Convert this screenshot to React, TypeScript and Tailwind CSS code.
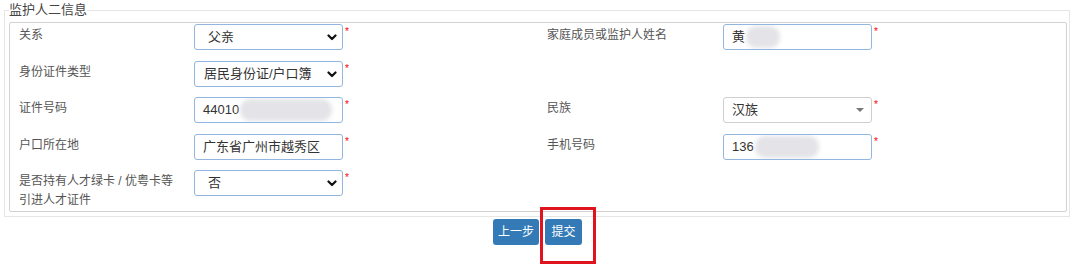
import React from 'react';

const font = { fontFamily: '"Liberation Sans", "Noto Sans CJK SC", sans-serif' };

function Star() {
  return <span className="ml-[2px] pt-[3px] text-[10px] leading-none text-[#ff0000]">*</span>;
}

function Blur({ w }: { w: string }) {
  return (
    <span className="relative ml-[1px] inline-block h-[22px] align-middle">
      <span className={`block h-full ${w} rounded-[10px] bg-[#e4e4e8] blur-[2px]`} />
    </span>
  );
}

function Chevron() {
  return (
    <svg width="10" height="7" viewBox="0 0 10 7" className="shrink-0">
      <path d="M1.5 1.5l3.5 3.5 3.5-3.5" fill="none" stroke="#111" strokeWidth="2.2" strokeLinecap="round" strokeLinejoin="round" />
    </svg>
  );
}

function Select({ value, pad = 'pl-[13px]' }: { value: string; pad?: string }) {
  return (
    <div className={`flex h-[26px] w-[149px] items-center justify-between rounded-[3px] border border-[#93b6e0] bg-white ${pad} pr-[5px] text-[13px] text-[#333]`}>
      <span className="whitespace-nowrap">{value}</span>
      <Chevron />
    </div>
  );
}

function Input({ children }: { children: React.ReactNode }) {
  return (
    <div className="flex h-[26px] w-[149px] items-center overflow-hidden rounded-[3px] border border-[#93b6e0] bg-white pl-[8px] text-[13px] text-[#333]">
      {children}
    </div>
  );
}

function Field({ label, right, children }: { label: React.ReactNode; right?: boolean; children?: React.ReactNode }) {
  return (
    <div className="flex items-start pl-[9px]">
      <div className={`${right ? 'w-[176px]' : 'w-[175px]'} pt-[2px] text-[12px] leading-[19px] text-[#555]`}>{label}</div>
      {children}
      {children && <Star />}
    </div>
  );
}

export default function App() {
  return (
    <div className="h-[272px] w-[1080px] bg-white" style={font}>
      <fieldset className="ml-[4px] w-[1066px] border border-[#e6e6e6] pb-[4px] pl-[4px] pr-[2px]">
        <legend className="text-[13px] leading-[20px] text-[#444]">监护人二信息</legend>
        <div className="mt-[2px] h-[190px] rounded-[2px] border border-[#d2d2d2] pt-[1px]">
          <div className="grid h-[37px] grid-cols-2">
            <Field label="关系"><Select value="父亲" /></Field>
            <Field label="家庭成员或监护人姓名" right>
              <Input>黄<Blur w="w-[34px]" /></Input>
            </Field>
          </div>
          <div className="grid h-[36px] grid-cols-2">
            <Field label="身份证件类型"><Select value="居民身份证/户口簿" pad="pl-[9px]" /></Field>
            <div />
          </div>
          <div className="grid h-[37px] grid-cols-2">
            <Field label="证件号码">
              <Input>44010<Blur w="w-[92px]" /></Input>
            </Field>
            <Field label="民族" right>
              <div className="flex h-[26px] w-[149px] items-center justify-between rounded-[3px] border border-[#cfcfcf] bg-white pl-[8px] pr-[7px] text-[13px] text-[#333]">
                <span>汉族</span>
                <svg width="8" height="4" viewBox="0 0 8 4"><path d="M0 0h8L4 4z" fill="#777" /></svg>
              </div>
            </Field>
          </div>
          <div className="grid h-[36px] grid-cols-2">
            <Field label="户口所在地"><Input>广东省广州市越秀区</Input></Field>
            <Field label="手机号码" right>
              <Input>136<Blur w="w-[64px]" /></Input>
            </Field>
          </div>
          <div className="grid grid-cols-2">
            <Field label={<>是否持有人才绿卡 / 优粤卡等<br />引进人才证件</>}>
              <Select value="否" />
            </Field>
            <div />
          </div>
        </div>
      </fieldset>
      <div className="mt-[2px] flex justify-center gap-[6px] pr-[5px]">
        <button className="h-[26px] w-[46px] rounded-[3px] bg-[#337ab7] text-[12px] text-white">上一步</button>
        <div className="relative">
          <button className="h-[26px] w-[37px] rounded-[3px] bg-[#337ab7] text-[12px] text-white">提交</button>
          <div className="absolute -left-[5px] -top-[12px] h-[57px] w-[56px] border-[3px] border-[#e0141e]" />
        </div>
      </div>
    </div>
  );
}
